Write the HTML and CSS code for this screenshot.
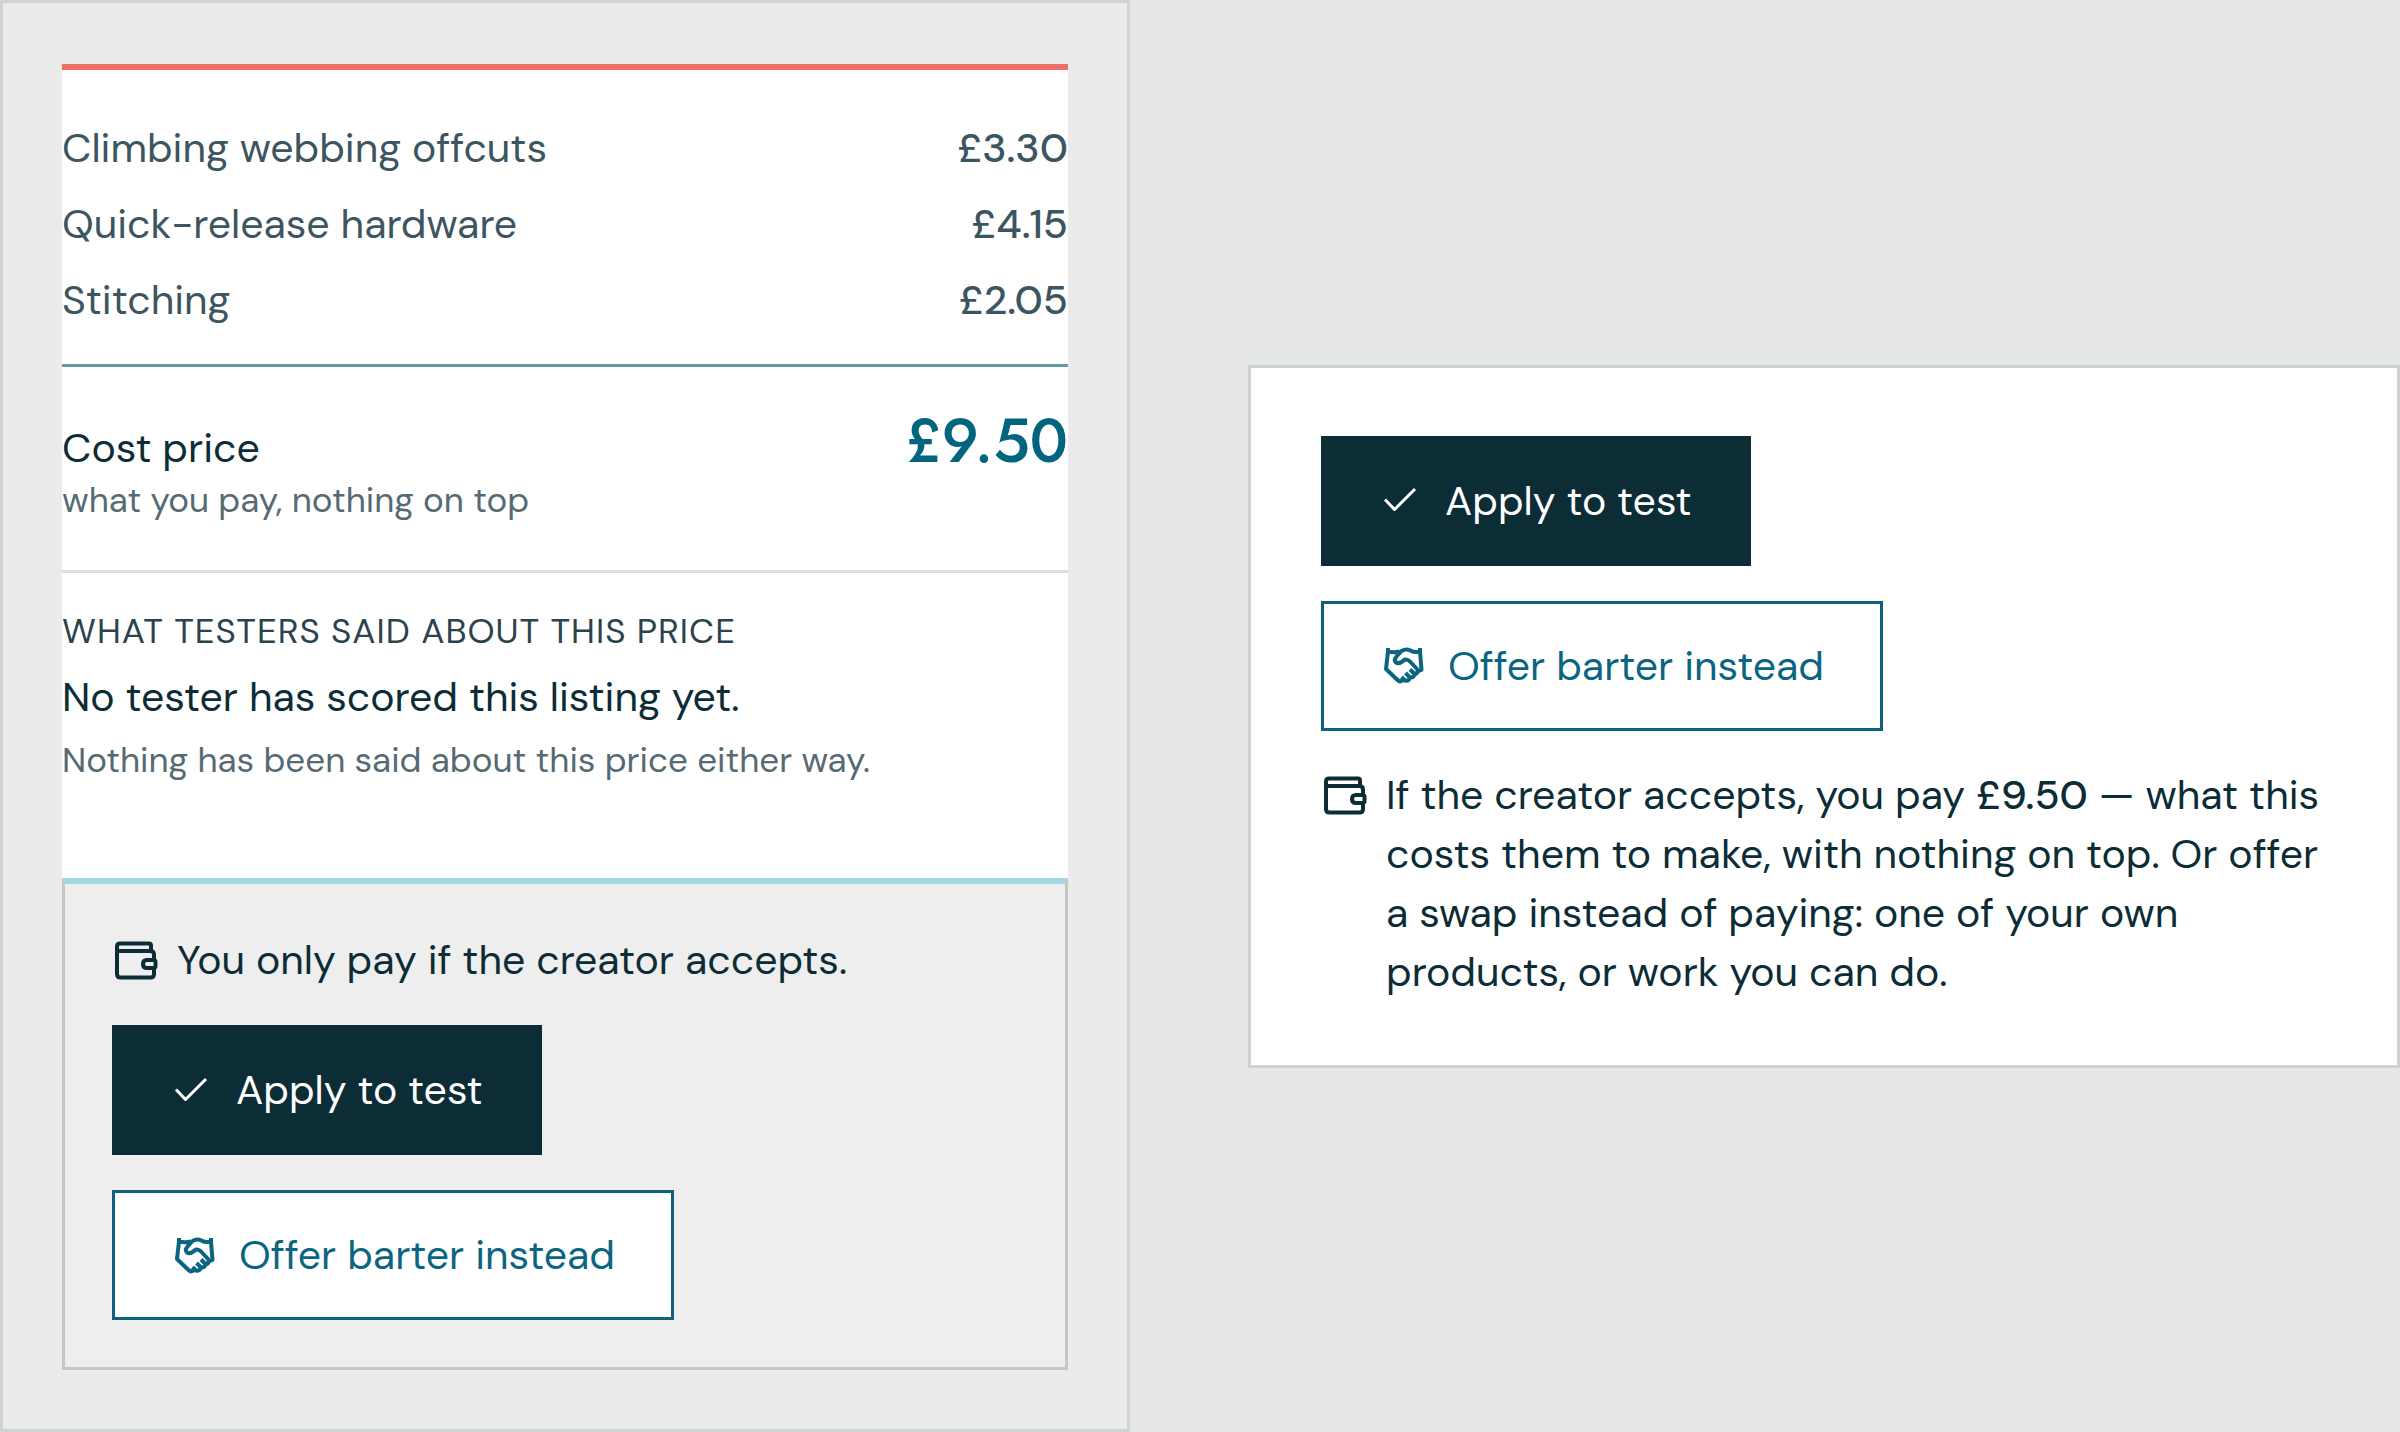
FILE: index.html
```html
<!DOCTYPE html>
<html lang="en">
<head>
<meta charset="utf-8">
<meta name="viewport" content="width=device-width, initial-scale=1">
<title>Cost price</title>
<link rel="stylesheet" href="styles.css">
</head>
<body>
<svg class="sprite" aria-hidden="true">
  <symbol id="icon-check" viewBox="0 0 41 41">
    <path d="M5 19.500L14.500 29.500L35 9"/>
  </symbol>
  <symbol id="icon-barter" viewBox="0 0 44 41">
    <path d="M8 3V6.500L6 24L17.500 35Q20 37.500 22.500 35.500L24 34M8 6.500Q14 8 19.500 6.500M40 3V6.500L41.500 25L37.500 26.500M40 6.500Q34.500 8 30.500 5.500Q26 3.500 21.500 6L16.500 11.500Q13.500 15 16 17.500Q18.500 19 21.500 17L25 14.500Q27.500 14 30 16.500L37.500 24.500Q38.500 28 35 29.500L30 24.500M34.500 29.500Q33.500 33 30 32.500L25.500 28M30 32.500Q28.500 36.500 25 35.500L21.500 32"/>
  </symbol>
  <symbol id="icon-wallet" viewBox="0 0 48 48">
    <path d="M39 17V13Q39 11 37 11H8Q5 11 5 14V41.500Q5 45 8.500 45H38.500Q42 45 42 41.500V36M5 18.500H38.500Q42 18.500 42 22V27M35 27.500H41.500Q43.500 27.500 43.500 29.500V33.500Q43.500 35.500 41.500 35.500H35Q31 35.500 31 31.500Q31 27.500 35 27.500Z" transform="translate(0 -4)"/>
  </symbol>
</svg>

<main class="layout">
  <section class="panel">
    <div class="sheet">
      <dl class="costs">
        <div class="cost"><dt>Climbing webbing offcuts</dt><dd>£3.30</dd></div>
        <div class="cost"><dt>Quick-release hardware</dt><dd>£4.15</dd></div>
        <div class="cost"><dt>Stitching</dt><dd>£2.05</dd></div>
      </dl>
      <div class="total">
        <div>
          <p class="total-name">Cost price</p>
          <p class="small">what you pay, nothing on top</p>
        </div>
        <strong class="total-price">£9.50</strong>
      </div>
      <div class="verdict">
        <h2 class="verdict-title">WHAT TESTERS SAID ABOUT THIS PRICE</h2>
        <p class="verdict-lead">No tester has scored this listing yet.</p>
        <p class="small">Nothing has been said about this price either way.</p>
      </div>
    </div>
    <div class="apply">
      <p class="note"><svg class="icon icon-wallet" aria-hidden="true"><use href="#icon-wallet"/></svg><span>You only pay if the creator accepts.</span></p>
      <div class="actions">
        <button class="button button-primary" type="button"><svg class="icon icon-check" aria-hidden="true"><use href="#icon-check"/></svg>Apply to test</button>
        <button class="button button-outline" type="button"><svg class="icon icon-barter" aria-hidden="true"><use href="#icon-barter"/></svg>Offer barter instead</button>
      </div>
    </div>
  </section>

  <section class="card">
    <div class="actions">
      <button class="button button-primary" type="button"><svg class="icon icon-check" aria-hidden="true"><use href="#icon-check"/></svg>Apply to test</button>
      <button class="button button-outline" type="button"><svg class="icon icon-barter" aria-hidden="true"><use href="#icon-barter"/></svg>Offer barter instead</button>
    </div>
    <p class="note"><svg class="icon icon-wallet" aria-hidden="true"><use href="#icon-wallet"/></svg><span>If the creator accepts, you pay <b>£9.50</b> — what this costs them to make, with nothing on top. Or offer a swap instead of paying: one of your own products, or work you can do.</span></p>
  </section>
</main>
</body>
</html>
```
FILE: styles.css
```css
* {
  box-sizing: border-box;
}

body {
  margin: 0;
  background: #e4e7e4;
  color: #0c2c36;
  font-family: "DM Sans", "Open Sans", sans-serif;
  font-size: 41px;
  line-height: 59px;
}

p, h2, dl, dd {
  margin: 0;
}

.sprite {
  position: absolute;
  width: 0;
  height: 0;
}

.layout {
  display: grid;
  grid-template-columns: 1130fr 1152fr;
  column-gap: 118px;
  align-items: center;
  min-height: 100vh;
}

/* Listing panel */

.panel {
  padding: 61px 59px 59px;
  border: 3px solid #cfd4d2;
  background: #ebebeb;
}

.sheet {
  border-top: 6px solid #ed6f66;
  background: #fff;
}

.costs {
  display: flex;
  flex-direction: column;
  gap: 16px;
  padding: 48px 0 34px;
  color: #3c5560;
  line-height: 60px;
}

.cost {
  display: flex;
  justify-content: space-between;
}

.cost dd {
  font-weight: 500;
}

.total {
  display: flex;
  justify-content: space-between;
  align-items: baseline;
  padding: 46px 0;
  border-top: 3px solid #6799a6;
  border-bottom: 3px solid #dcdddd;
}

.total-name {
  line-height: 56px;
}

.total-price {
  color: #026580;
  font-family: Jost, "DM Sans", sans-serif;
  font-size: 61px;
  font-weight: 500;
  line-height: 56px;
}

.small {
  color: #566a73;
  font-size: 35px;
  line-height: 48px;
}

.verdict {
  display: flex;
  flex-direction: column;
  padding: 34px 0 94px;
}

.verdict-title {
  color: #2b434d;
  font-size: 35px;
  font-weight: 400;
  letter-spacing: 1px;
  line-height: 48px;
}

.verdict-lead {
  margin: 12px 0 9px;
  line-height: 60px;
}

.apply {
  display: flex;
  flex-direction: column;
  gap: 35px;
  padding: 47px;
  border: 3px solid #c5c7c7;
  border-top: 6px solid #a2d9e1;
  background: #eee;
}

/* Buttons and note */

.actions {
  display: flex;
  flex-direction: column;
  align-items: flex-start;
  gap: 35px;
}

.button {
  display: inline-flex;
  align-items: center;
  gap: 24px;
  padding: 32px 56px;
  border: 3px solid #0c2c36;
  border-radius: 0;
  font: inherit;
  line-height: 60px;
}

.button-primary {
  background: #0c2c36;
  color: #fff;
}

.button-outline {
  border-color: #0f627a;
  background: #fff;
  color: #0c6580;
}

.note {
  display: flex;
  gap: 17px;
}

.note b {
  font-weight: 500;
}

.icon {
  flex: none;
  width: 41px;
  height: 41px;
  overflow: visible;
  fill: none;
  stroke: currentColor;
  stroke-width: 4;
  stroke-linejoin: round;
}

.icon-check {
  stroke-width: 3;
}

.icon-barter {
  width: 44px;
}

.icon-wallet {
  width: 48px;
  height: 59px;
}

/* Summary card */

.card {
  display: flex;
  flex-direction: column;
  gap: 35px;
  padding: 68px 70px 63px;
  border: 3px solid #cdd1cf;
  background: #fff;
}
```
